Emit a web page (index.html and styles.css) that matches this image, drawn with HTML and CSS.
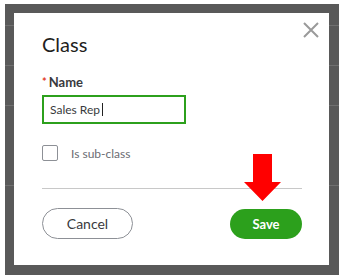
FILE: index.html
```html
<!DOCTYPE html>
<html lang="en">
<head>
<meta charset="utf-8">
<title>Class</title>
<link rel="stylesheet" href="styles.css">
</head>
<body>
<div class="overlay">
  <div class="modal">
    <svg class="close" width="16" height="16" viewBox="0 0 16 16" aria-label="Close">
      <path d="M1 1 L15 15 M15 1 L1 15" stroke="#9a9a9a" stroke-width="2" fill="none"/>
    </svg>
    <h1 class="title">Class</h1>
    <label class="field-label"><span class="req">*</span>Name</label>
    <div class="text-input"><span class="value">Sales Rep</span><span class="caret"></span></div>
    <div class="check-row">
      <span class="checkbox"></span>
      <span class="check-label">Is sub-class</span>
    </div>
    <div class="divider"></div>
    <div class="footer">
      <button class="btn btn-cancel">Cancel</button>
      <button class="btn btn-save">Save</button>
    </div>
    <svg class="arrow" width="37" height="47" viewBox="0 0 37 47">
      <path d="M9 0 H28 V28 H37 L18.5 47 L0 28 H9 Z" fill="#ff0000"/>
    </svg>
  </div>
</div>
</body>
</html>
```

FILE: styles.css
```css
* { box-sizing: border-box; }
html, body { margin: 0; padding: 0; background: #ffffff; }
body { width: 339px; height: 279px; overflow: hidden; font-family: Lato, "Open Sans", sans-serif; color: #393a3d; }

.overlay {
  margin: 4px 0 0 5px;
  width: 334px;
  height: 271px;
  padding: 9px 10px 10px 9px;
  background-color: #595959;
  background-image:
    linear-gradient(#707070, #707070),
    linear-gradient(#707070, #707070),
    linear-gradient(#707070, #707070),
    linear-gradient(#707070, #707070);
  background-size: 100% 1px;
  background-repeat: no-repeat;
  background-position: 0 21px, 0 61px, 0 101px, 0 181px;
}

.modal {
  position: relative;
  width: 315px;
  height: 252px;
  background: #ffffff;
  padding: 19px 27px 0 28px;
  display: flex;
  flex-direction: column;
}

.close { position: absolute; left: 289px; top: 9px; }

.title {
  margin: 0;
  font-size: 20px;
  line-height: 24px;
  font-weight: 400;
  color: #1f1f21;
}

.field-label {
  margin-top: 18px;
  font-size: 13px;
  line-height: 16px;
  font-weight: 700;
  color: #393a3d;
}
.req { color: #e2371d; font-size: 11px; margin-right: 2px; position: relative; top: -1px; }

.text-input {
  margin-top: 4px;
  width: 144px;
  height: 29px;
  border: 2px solid #2ca01c;
  padding: 0 6px;
  display: flex;
  align-items: center;
  font-size: 12px;
  color: #393a3d;
}
.caret { display: inline-block; width: 1px; height: 13px; background: #222; margin-left: 2px; }

.check-row {
  margin-top: 21px;
  display: flex;
  align-items: center;
  gap: 13px;
}
.checkbox {
  width: 16px;
  height: 16px;
  border: 1px solid #8d9096;
  border-radius: 2px;
}
.check-label { font-size: 12px; color: #6b6c72; }

.divider {
  margin-top: 27px;
  height: 1px;
  background: #c8c8c8;
}

.footer {
  margin-top: 19px;
  display: flex;
  justify-content: space-between;
  align-items: center;
}
.btn {
  font-family: inherit;
  border-radius: 16px;
  cursor: pointer;
  padding: 0;
}
.btn-cancel {
  width: 91px;
  height: 31px;
  background: #ffffff;
  border: 1px solid #8d9096;
  color: #393a3d;
  font-size: 14px;
}
.btn-save {
  width: 72px;
  height: 30px;
  background: #2ca01c;
  border: none;
  color: #ffffff;
  font-size: 13px;
  font-weight: 700;
}

.arrow { position: absolute; left: 230px; top: 141px; }
```
